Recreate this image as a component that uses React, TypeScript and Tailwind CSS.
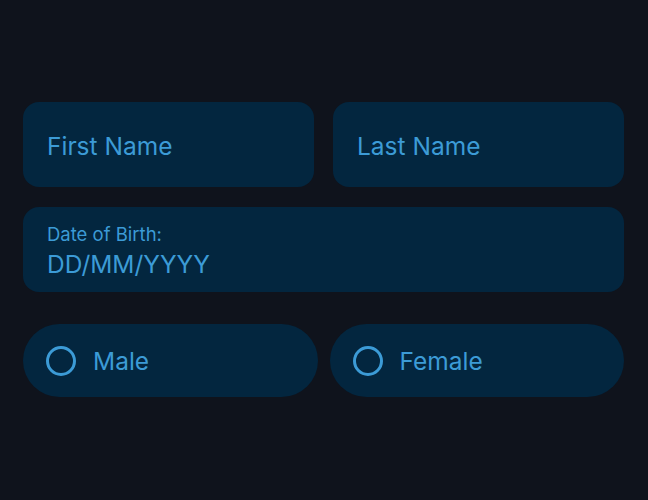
import React from "react";

function Radio({ label }: { label: string }) {
  return (
    <div className="flex h-[73px] flex-1 items-center gap-[17px] rounded-full bg-[#03263f] pl-[23px]">
      <span className="h-[30px] w-[30px] shrink-0 rounded-full border-[3px] border-[#3c9bd6]" />
      <span className="pt-[1px] text-[24.5px] leading-[30px] text-[#3c9bd6]">{label}</span>
    </div>
  );
}

export default function App() {
  return (
    <div
      className="min-h-[500px] w-[648px] bg-[#0f131c] pl-[23px] pr-[24px] pt-[102px]"
      style={{ fontFamily: "Inter, 'Noto Sans', sans-serif" }}
    >
      <div className="flex gap-[19px]">
        <div className="flex h-[85px] flex-1 items-center rounded-[16px] bg-[#03263f] px-[24px] pt-[2px] text-[24.5px] leading-[30px] text-[#3c9bd6]">
          First Name
        </div>
        <div className="flex h-[85px] flex-1 items-center rounded-[16px] bg-[#03263f] px-[24px] pt-[2px] text-[24.5px] leading-[30px] text-[#3c9bd6]">
          Last Name
        </div>
      </div>
      <div className="mt-[20px] flex h-[85px] flex-col justify-center rounded-[16px] bg-[#03263f] px-[24px] pt-[2px] text-[#3c9bd6]">
        <span className="text-[18.5px] leading-[22px]">Date of Birth:</span>
        <span className="mt-[4px] text-[24.5px] leading-[30px]">DD/MM/YYYY</span>
      </div>
      <div className="mt-[32px] flex gap-[12px]">
        <Radio label="Male" />
        <Radio label="Female" />
      </div>
    </div>
  );
}
